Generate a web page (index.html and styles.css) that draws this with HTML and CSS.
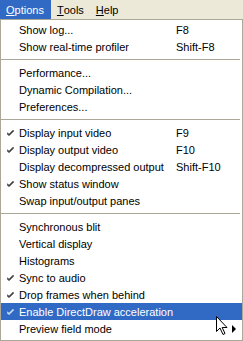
FILE: index.html
```html
<!DOCTYPE html>
<html lang="en">
<head>
    <meta charset="UTF-8">
    <meta name="viewport" content="width=device-width, initial-scale=1.0">
    <title>Options menu</title>
    <link rel="stylesheet" href="styles.css">
</head>
<body>
    <div class="menubar">
        <span class="menu-title active"><u>O</u>ptions</span>
        <span class="menu-title"><u>T</u>ools</span>
        <span class="menu-title"><u>H</u>elp</span>
    </div>

    <div class="dropdown">
        <div class="item"><span class="check"></span><span class="label">Show log...</span><span class="key">F8</span></div>
        <div class="item"><span class="check"></span><span class="label">Show real-time profiler</span><span class="key">Shift-F8</span></div>
        <div class="separator"></div>
        <div class="item"><span class="check"></span><span class="label">Performance...</span><span class="key"></span></div>
        <div class="item"><span class="check"></span><span class="label">Dynamic Compilation...</span><span class="key"></span></div>
        <div class="item"><span class="check"></span><span class="label">Preferences...</span><span class="key"></span></div>
        <div class="separator"></div>
        <div class="item"><span class="check"><svg width="7" height="7" viewBox="0 0 7 7"><path d="M0 3.5 L2 5.5 L6.5 1 M0 4.5 L2 6.5 L6.5 2"/></svg></span><span class="label">Display input video</span><span class="key">F9</span></div>
        <div class="item"><span class="check"><svg width="7" height="7" viewBox="0 0 7 7"><path d="M0 3.5 L2 5.5 L6.5 1 M0 4.5 L2 6.5 L6.5 2"/></svg></span><span class="label">Display output video</span><span class="key">F10</span></div>
        <div class="item"><span class="check"></span><span class="label">Display decompressed output</span><span class="key">Shift-F10</span></div>
        <div class="item"><span class="check"><svg width="7" height="7" viewBox="0 0 7 7"><path d="M0 3.5 L2 5.5 L6.5 1 M0 4.5 L2 6.5 L6.5 2"/></svg></span><span class="label">Show status window</span><span class="key"></span></div>
        <div class="item"><span class="check"></span><span class="label">Swap input/output panes</span><span class="key"></span></div>
        <div class="separator"></div>
        <div class="item"><span class="check"></span><span class="label">Synchronous blit</span><span class="key"></span></div>
        <div class="item"><span class="check"></span><span class="label">Vertical display</span><span class="key"></span></div>
        <div class="item"><span class="check"></span><span class="label">Histograms</span><span class="key"></span></div>
        <div class="item"><span class="check"><svg width="7" height="7" viewBox="0 0 7 7"><path d="M0 3.5 L2 5.5 L6.5 1 M0 4.5 L2 6.5 L6.5 2"/></svg></span><span class="label">Sync to audio</span><span class="key"></span></div>
        <div class="item"><span class="check"><svg width="7" height="7" viewBox="0 0 7 7"><path d="M0 3.5 L2 5.5 L6.5 1 M0 4.5 L2 6.5 L6.5 2"/></svg></span><span class="label">Drop frames when behind</span><span class="key"></span></div>
        <div class="item selected"><span class="check"><svg width="7" height="7" viewBox="0 0 7 7"><path d="M0 3.5 L2 5.5 L6.5 1 M0 4.5 L2 6.5 L6.5 2"/></svg></span><span class="label">Enable DirectDraw acceleration</span><span class="key"></span></div>
        <div class="item submenu"><span class="check"></span><span class="label">Preview field mode</span><span class="key"></span></div>

        <!-- mouse pointer over the highlighted entry -->
        <svg class="cursor" width="12" height="19" viewBox="0 0 12 19">
            <path d="M0.5 0.5 V15.5 L4 12 L7 18.5 L9 17.5 L6.2 11.5 H11 Z" fill="#fff" stroke="#000" stroke-width="1"/>
        </svg>
    </div>
</body>
</html>
```

FILE: styles.css
```css
body {
    margin: 0;
    background-color: #ece9d8;
    font-family: Tahoma, "Liberation Sans", Arial, sans-serif;
    font-size: 11px;
    color: #000;
    width: 243px;
    height: 341px;
    overflow: hidden;
}
.menubar {
    display: flex;
    height: 19px;
}
.menu-title {
    display: flex;
    align-items: center;
    padding: 0 6px;
}
.menu-title.active {
    background-color: #316ac5;
    color: #fff;
    padding: 0 7px 0 6px;
}
.dropdown {
    position: relative;
    background: #fff;
    border: 1px solid #aca899;
    padding: 1px 0;
    box-sizing: border-box;
    height: 322px;
}
.item {
    display: flex;
    align-items: center;
    height: 17px;
}
.check {
    width: 18px;
    height: 17px;
    flex: none;
    display: flex;
    align-items: center;
    padding-left: 6px;
    box-sizing: border-box;
}
.check svg {
    fill: none;
    stroke: #000;
    stroke-width: 1;
}
.item.selected {
    background-color: #316ac5;
    color: #fff;
}
.item.selected .check svg {
    stroke: #fff;
}
.label {
    flex: 1;
    white-space: nowrap;
}
.key {
    width: 66px;
    flex: none;
}
.item.submenu .key {
    display: flex;
    justify-content: flex-end;
    align-items: center;
    padding-right: 6px;
    box-sizing: border-box;
}
.item.submenu .key::after {
    content: "";
    border-left: 4px solid #000;
    border-top: 4px solid transparent;
    border-bottom: 4px solid transparent;
}
.separator {
    height: 9px;
    display: flex;
    align-items: center;
    margin: 0 2px 0 0;
}
.separator::before {
    content: "";
    flex: 1;
    height: 1px;
    background: #aca899;
}
.cursor {
    position: absolute;
    left: 215px;
    top: 296px;
}
```
